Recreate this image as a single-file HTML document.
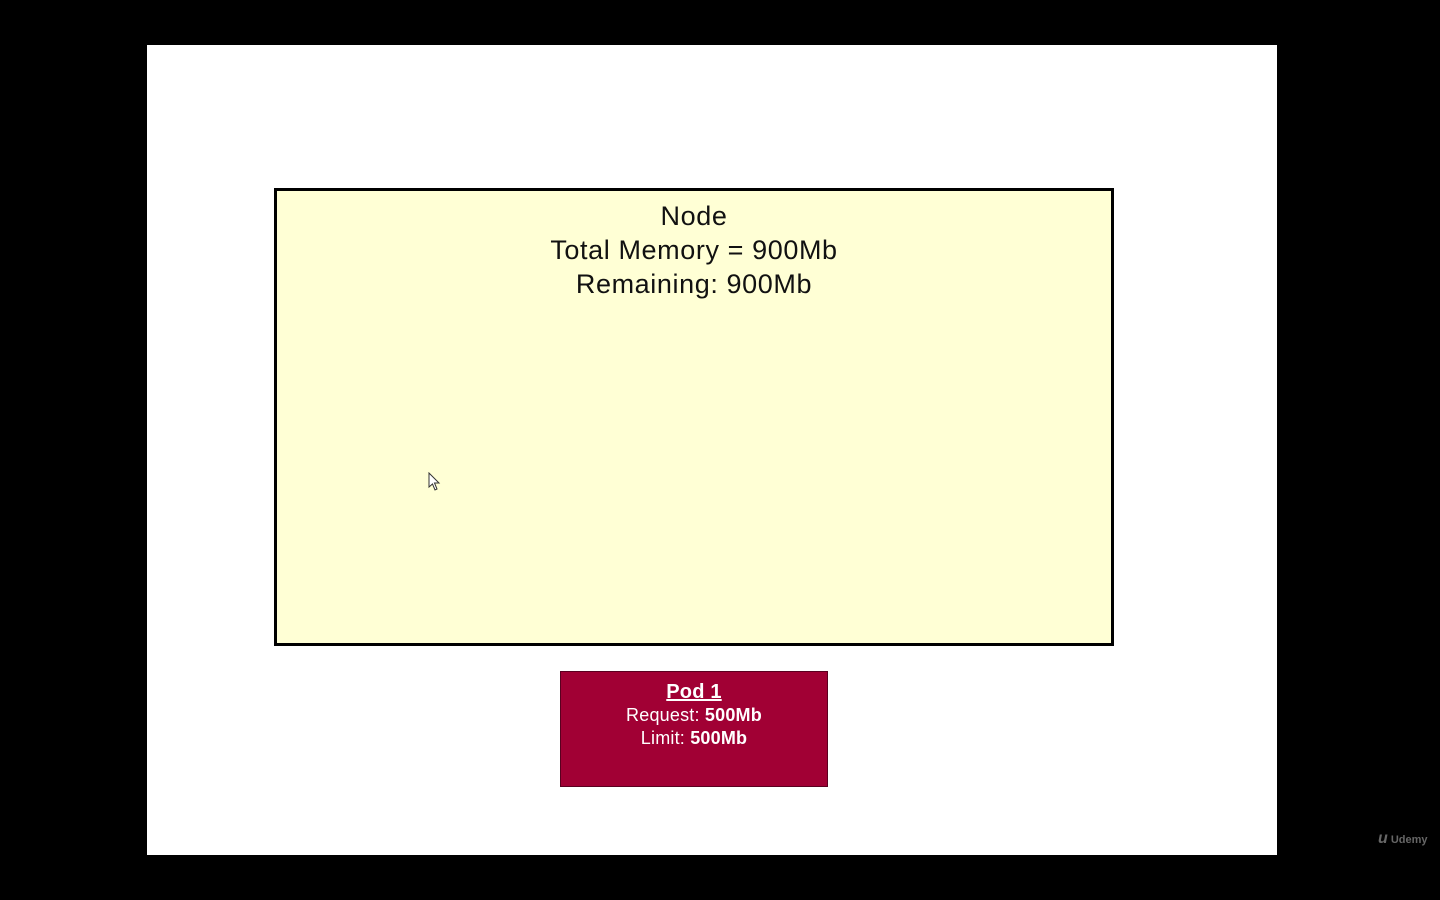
<!DOCTYPE html>
<html><head><style>
body{margin:0;width:1440px;height:900px;background:#000;position:relative;overflow:hidden;font-family:"Liberation Sans",sans-serif}
.slide{position:absolute;left:147px;top:45px;width:1130px;height:810px;background:#fff}
.node{position:absolute;left:274px;top:188px;width:834px;height:452px;border:3px solid #000;background:#ffffd5;text-align:center;color:#111;font-size:27px;letter-spacing:0.6px;line-height:34px}
.node div:first-child{margin-top:8px}
.pod{position:absolute;left:560px;top:671px;width:266px;height:114px;border:1px solid #5a0020;background:#a10034;color:#fff;text-align:center;font-size:18px;letter-spacing:0.2px;line-height:23px}
.pod .t{font-weight:bold;text-decoration:underline;font-size:20px;margin-top:8px;line-height:24px}
.ud{position:absolute;left:1378px;top:830px;color:#666;font-size:11px;font-weight:bold}
</style></head><body>
<div class="slide"></div>
<div class="node"><div>Node</div><div>Total Memory = 900Mb</div><div>Remaining: 900Mb</div></div>
<svg style="position:absolute;left:428px;top:472px" width="14" height="20"><path d="M1 1 L1 15 L4.5 12 L7 18 L9 17 L6.5 11 L11 11 Z" fill="#fff" stroke="#333" stroke-width="1"/></svg>
<div class="pod"><div class="t">Pod 1</div><div>Request: <b>500Mb</b></div><div>Limit: <b>500Mb</b></div></div>
<div class="ud"><span style="font-size:16px;font-style:italic">u</span> Udemy</div>
</body></html>
